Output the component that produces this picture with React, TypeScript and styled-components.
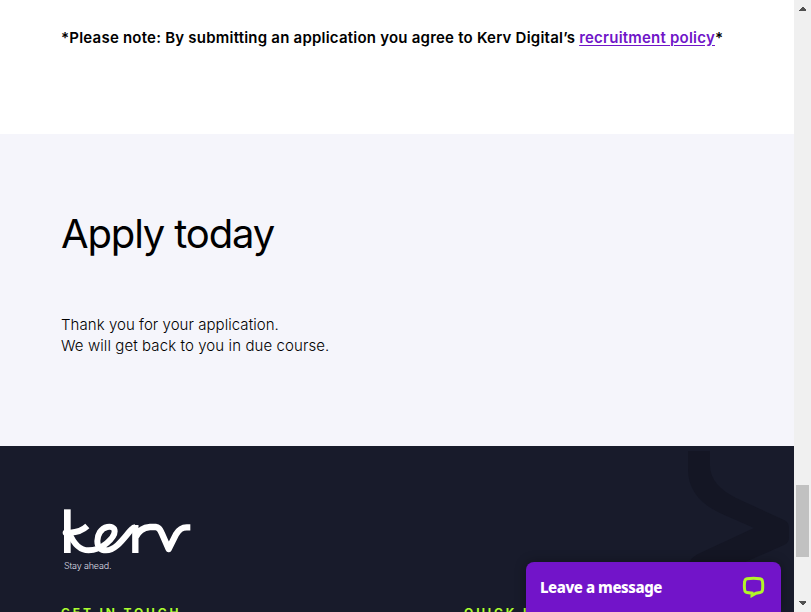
import React from "react";
import styled, { createGlobalStyle } from "styled-components";

const GlobalStyle = createGlobalStyle`
  * { box-sizing: border-box; }
  html, body { margin: 0; padding: 0; overflow: hidden; }
  body { font-family: Inter, "Liberation Sans", sans-serif; color: #000; }
`;

const Viewport = styled.div`
  position: relative;
  display: grid;
  grid-template-columns: 1fr 17px;
  width: 811px;
  height: 612px;
  overflow: hidden;
`;

const Page = styled.main`
  display: grid;
  grid-template-rows: 134px 312px 166px;
  min-width: 0;
  overflow: hidden;
`;

const NoteSection = styled.section`
  padding: 26px 0 0 61px;
  background: #fff;
`;

const Note = styled.p`
  margin: 0;
  font-size: 15px;
  font-weight: 600;
  line-height: 24px;
  letter-spacing: 0.22px;
  white-space: nowrap;
`;

const PolicyLink = styled.a`
  color: #7015c8;
  text-decoration: underline;
  text-underline-offset: 2px;
`;

const ApplySection = styled.section`
  padding: 76px 0 0 61px;
  background: #f5f5fb;
`;

const Heading = styled.h2`
  margin: 0 0 56px;
  font-size: 40px;
  font-weight: 380;
  line-height: 48px;
  letter-spacing: -1.15px;
  white-space: nowrap;
`;

const Message = styled.p<{ $spacing: number }>`
  margin: 0;
  font-size: 15px;
  font-weight: 360;
  line-height: 21px;
  letter-spacing: ${({ $spacing }) => $spacing}px;
  white-space: nowrap;
`;

const Footer = styled.footer`
  position: relative;
  display: flex;
  flex-direction: column;
  padding: 59px 0 0 60px;
  background: #181b2b;
  overflow: hidden;
`;

const Watermark = styled.svg`
  position: absolute;
  left: 659px;
  top: 0;
`;

const Brand = styled.div`
  position: relative;
  flex: none;
  height: 97px;
`;

const Wordmark = styled.svg`
  display: block;
`;

const Tagline = styled.div`
  margin: 1px 0 0 4px;
  color: #dedee4;
  font-size: 9px;
  font-weight: 300;
  line-height: 12px;
  letter-spacing: -0.17px;
`;

const FooterColumns = styled.div`
  display: grid;
  grid-template-columns: 403px 1fr;
  position: relative;
`;

const ColumnTitle = styled.h3`
  margin: 0;
  padding-left: 1px;
  color: #adff2f;
  font-size: 12px;
  font-weight: 700;
  line-height: 22px;
  letter-spacing: 2.85px;
  white-space: nowrap;
`;

const Scrollbar = styled.aside`
  display: flex;
  flex-direction: column;
  align-items: center;
  background: #f0f0f0;
`;

const Arrow = styled.svg`
  display: block;
  flex: none;
`;

const Track = styled.div`
  flex: 1;
  width: 13px;
  padding-top: 468px;
`;

const Thumb = styled.div`
  height: 72px;
  background: #c1c1c1;
`;

const ChatBar = styled.button`
  position: absolute;
  left: 526px;
  top: 562px;
  display: flex;
  align-items: center;
  justify-content: space-between;
  width: 255px;
  height: 50px;
  padding: 0 16px 0 14px;
  border: 0;
  border-radius: 8px 8px 0 0;
  background: #7214c9;
  box-shadow: 0 0 12px rgba(0, 0, 0, 0.3);
  color: #fff;
  font: 800 15px/20px "Noto Sans", sans-serif;
  letter-spacing: -0.45px;
`;

const ChatLabel = styled.span`
  padding-bottom: 1px;
`;

const PageClip = styled.div`
  position: relative;
  overflow: hidden;
`;

export default function App() {
  return (
    <>
      <GlobalStyle />
      <Viewport>
        <PageClip>
          <Page>
            <NoteSection>
              <Note>
                *Please note: By submitting an application you agree to Kerv Digital’s{" "}
                <PolicyLink>recruitment policy</PolicyLink>*
              </Note>
            </NoteSection>
            <ApplySection>
              <Heading>Apply today</Heading>
              <Message $spacing={0.05}>Thank you for your application.</Message>
              <Message $spacing={0.09}>We will get back to you in due course.</Message>
            </ApplySection>
            <Footer>
              <Watermark width="134" height="166" viewBox="0 0 134 166" aria-hidden="true">
                <path
                  d="M29 5H51V20C51 33 61 44 77 52L125 74Q130 76 130 82V91Q130 97 125 99L50 132Q30 140 30 119Q30 113 39 108L95 82L61 67C40 57 29 43 29 23Z"
                  fill="#141624"
                />
              </Watermark>
              <Brand>
                <Wordmark width="134" height="54" viewBox="30 30 402 162" role="img" aria-label="kerv">
                  <g fill="none" stroke="#fff" strokeWidth="18" strokeLinejoin="round">
                    <path d="M52 43V174" strokeWidth="20" />
                    <path d="M48 113H60C82 112 97 107 112 93" />
                    <circle cx="47" cy="113" r="9" fill="#fff" stroke="none" />
                    <path d="M58 114C70 144 88 166 116 166C156 166 194 128 194 109C194 97 183 94 172 96C152 100 142 120 142 138C142 157 153 166 168 166C201 166 228 119 246 102Q250 98 256 97" />
                    <path d="M256 90V174M256 128C265 108 279 97 300 96H317C326 97 331 104 335 114L356 162L378 118C388 101 396 97 410 97H421" strokeWidth="19" />
                  </g>
                </Wordmark>
                <Tagline>Stay ahead.</Tagline>
              </Brand>
              <FooterColumns>
                <ColumnTitle>GET IN TOUCH</ColumnTitle>
                <ColumnTitle>QUICK LINKS</ColumnTitle>
              </FooterColumns>
            </Footer>
          </Page>
          <ChatBar>
            <ChatLabel>Leave a message</ChatLabel>
            <svg width="23" height="22" viewBox="0 0 23 22" aria-hidden="true">
              <path
                d="M5 2.8Q11.5 1.9 18 2.8Q20.3 3.1 20.5 5.6Q21 9.6 20.5 14.1Q20 16.2 18 16.6L14 17.2L10 19.5V17.2L5 16.6Q3 16.2 2.7 14.1Q2 9.6 2.7 5.6Q3 3.1 5 2.8Z"
                fill="none"
                stroke="#b2f52a"
                strokeWidth="3"
              />
            </svg>
          </ChatBar>
        </PageClip>
        <Scrollbar>
          <Arrow width="17" height="17" viewBox="0 0 17 17" shapeRendering="crispEdges">
            <path d="M5 11V10L8.5 6.5L12 10V11Z" fill="#505050" />
          </Arrow>
          <Track>
            <Thumb />
          </Track>
          <Arrow width="17" height="17" viewBox="0 0 17 17" shapeRendering="crispEdges">
            <path d="M5 6V7L8.5 10.5L12 7V6Z" fill="#505050" />
          </Arrow>
        </Scrollbar>
      </Viewport>
    </>
  );
}
